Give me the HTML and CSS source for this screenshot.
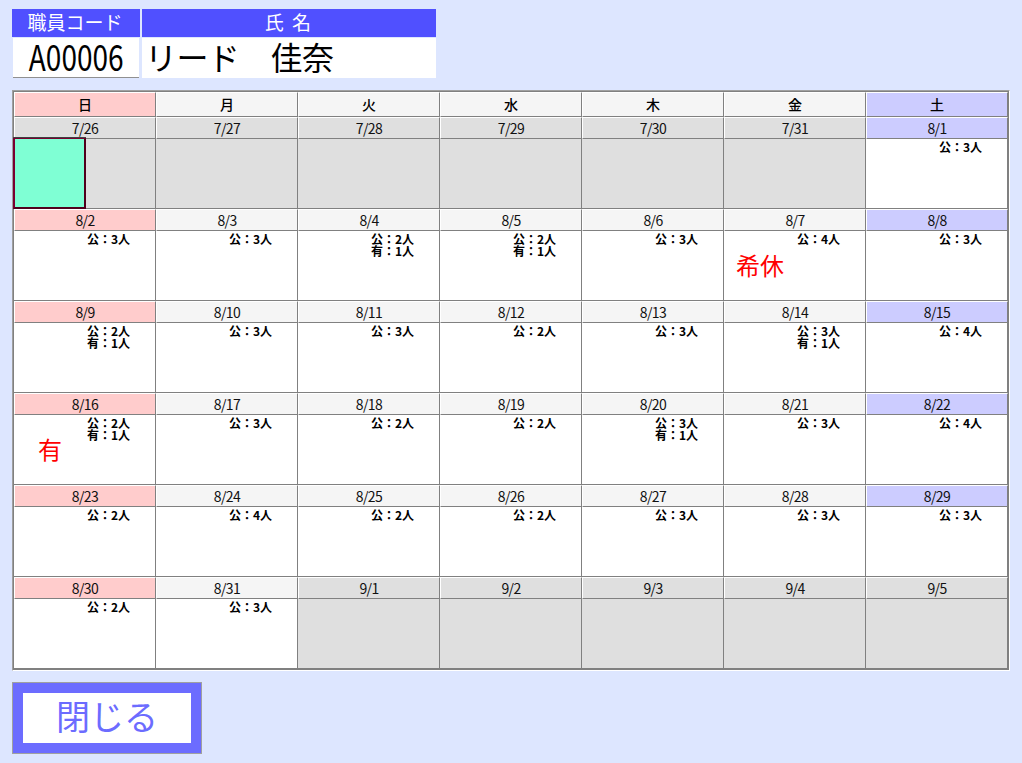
FILE: index.html
```html
<!DOCTYPE html>
<html lang="ja">
<head>
<meta charset="utf-8">
<title>勤務カレンダー</title>
<link rel="stylesheet" href="styles.css">
</head>
<body>
<div class="info">
  <div class="info-col code-col">
    <div class="info-head">職員コード</div>
    <div class="info-val code-val"><span class="code-txt">A00006</span></div>
  </div>
  <div class="info-col name-col">
    <div class="info-head name-head">氏 名</div>
    <div class="info-val name-val">リード　佳奈</div>
  </div>
</div>
<div class="cal">
  <div class="grid">
    <div class="c wd sun">日</div><div class="c wd">月</div><div class="c wd">火</div><div class="c wd">水</div><div class="c wd">木</div><div class="c wd">金</div><div class="c wd sat">土</div>

    <div class="c dt off">7/26</div><div class="c dt off">7/27</div><div class="c dt off">7/28</div><div class="c dt off">7/29</div><div class="c dt off">7/30</div><div class="c dt off">7/31</div><div class="c dt sat">8/1</div>
    <div class="c bd off"><div class="sel"></div></div><div class="c bd off"></div><div class="c bd off"></div><div class="c bd off"></div><div class="c bd off"></div><div class="c bd off"></div><div class="c bd"><div class="n">公：3人</div></div>

    <div class="c dt sun">8/2</div><div class="c dt">8/3</div><div class="c dt">8/4</div><div class="c dt">8/5</div><div class="c dt">8/6</div><div class="c dt">8/7</div><div class="c dt sat">8/8</div>
    <div class="c bd"><div class="n">公：3人</div></div><div class="c bd"><div class="n">公：3人</div></div><div class="c bd"><div class="n">公：2人<br>有：1人</div></div><div class="c bd"><div class="n">公：2人<br>有：1人</div></div><div class="c bd"><div class="n">公：3人</div></div><div class="c bd"><div class="m">希休</div><div class="n">公：4人</div></div><div class="c bd"><div class="n">公：3人</div></div>

    <div class="c dt sun">8/9</div><div class="c dt">8/10</div><div class="c dt">8/11</div><div class="c dt">8/12</div><div class="c dt">8/13</div><div class="c dt">8/14</div><div class="c dt sat">8/15</div>
    <div class="c bd"><div class="n">公：2人<br>有：1人</div></div><div class="c bd"><div class="n">公：3人</div></div><div class="c bd"><div class="n">公：3人</div></div><div class="c bd"><div class="n">公：2人</div></div><div class="c bd"><div class="n">公：3人</div></div><div class="c bd"><div class="n">公：3人<br>有：1人</div></div><div class="c bd"><div class="n">公：4人</div></div>

    <div class="c dt sun">8/16</div><div class="c dt">8/17</div><div class="c dt">8/18</div><div class="c dt">8/19</div><div class="c dt">8/20</div><div class="c dt">8/21</div><div class="c dt sat">8/22</div>
    <div class="c bd"><div class="m">有</div><div class="n">公：2人<br>有：1人</div></div><div class="c bd"><div class="n">公：3人</div></div><div class="c bd"><div class="n">公：2人</div></div><div class="c bd"><div class="n">公：2人</div></div><div class="c bd"><div class="n">公：3人<br>有：1人</div></div><div class="c bd"><div class="n">公：3人</div></div><div class="c bd"><div class="n">公：4人</div></div>

    <div class="c dt sun">8/23</div><div class="c dt">8/24</div><div class="c dt">8/25</div><div class="c dt">8/26</div><div class="c dt">8/27</div><div class="c dt">8/28</div><div class="c dt sat">8/29</div>
    <div class="c bd"><div class="n">公：2人</div></div><div class="c bd"><div class="n">公：4人</div></div><div class="c bd"><div class="n">公：2人</div></div><div class="c bd"><div class="n">公：2人</div></div><div class="c bd"><div class="n">公：3人</div></div><div class="c bd"><div class="n">公：3人</div></div><div class="c bd"><div class="n">公：3人</div></div>

    <div class="c dt sun">8/30</div><div class="c dt">8/31</div><div class="c dt off">9/1</div><div class="c dt off">9/2</div><div class="c dt off">9/3</div><div class="c dt off">9/4</div><div class="c dt off">9/5</div>
    <div class="c bd"><div class="n">公：2人</div></div><div class="c bd"><div class="n">公：3人</div></div><div class="c bd off"></div><div class="c bd off"></div><div class="c bd off"></div><div class="c bd off"></div><div class="c bd off"></div>
  </div>
</div>
<div class="btn-box"><button class="close" type="button">閉じる</button></div>
</body>
</html>
```
FILE: styles.css
```css
* { box-sizing: border-box; }
html, body { margin: 0; padding: 0; }
body {
  width: 1022px;
  height: 763px;
  overflow: hidden;
  background: #dde6ff;
  font-family: "Noto Sans CJK JP", "Noto Sans", sans-serif;
  color: #000;
  padding: 9px 0 0 12px;
}
.info { display: flex; gap: 2px; height: 69px; }
.info-col { display: flex; flex-direction: column; }
.code-col { width: 128px; }
.name-col { width: 294px; }
.info-head {
  height: 28px;
  padding-right: 2px;
  background: #5050ff;
  color: #fff;
  font-size: 19px;
  line-height: 26px;
  text-align: center;
}
.name-head { word-spacing: 4px; }
.info-val {
  margin-top: 1px;
  height: 40px;
  background: #fff;
  font-size: 32px;
  line-height: 36px;
  white-space: nowrap;
}
.code-val {
  margin-left: 1px;
  margin-right: 1px;
  display: flex;
  justify-content: center;
  border-bottom: 1px solid #909090;
}
.code-txt {
  display: block;
  flex: none;
  font-size: 35px;
  line-height: 36px;
  transform: scaleX(0.8);
}
.name-val { padding-left: 3px; letter-spacing: -0.6px; }

.cal {
  margin-top: 12px;
  width: 998px;
  border: 1px solid;
  border-color: #a0a0a0 #fff #fff #a0a0a0;
}
.grid {
  display: grid;
  grid-template-columns: repeat(7, 142px);
  grid-template-rows: 25px 22px 70px 22px 70px 22px 70px 22px 70px 22px 70px 22px 70px;
  border: 1px solid #808080;
}
.c {
  border-right: 1px solid #808080;
  border-bottom: 1px solid #808080;
}
.wd, .dt {
  background: #f5f5f5;
  border-top: 1px solid #fff;
  border-left: 1px solid #fff;
  text-align: center;
}
.wd { font-size: 14px; line-height: 23px; font-weight: 500; }
.dt { font-size: 14px; line-height: 21px; letter-spacing: -0.6px; color: #111; }
.sun { background: #ffcccc; }
.sat { background: #ccccff; }
.off { background: #dfdfdf; }
.bd {
  position: relative;
  display: grid;
  grid-template-columns: 73px 1fr;
  grid-template-rows: 1fr;
  background: #fff;
}
.bd.off { background: #dfdfdf; }
.m {
  grid-column: 1;
  grid-row: 1;
  align-self: center;
  margin-bottom: 2px;
  padding-right: 1px;
  text-align: center;
  color: #ff0000;
  font-size: 24px;
  line-height: 28px;
  white-space: nowrap;
}
.n {
  grid-column: 2;
  grid-row: 1;
  padding-top: 2px;
  font-size: 12px;
  line-height: 12px;
  font-weight: 700;
  white-space: nowrap;
}
.sel {
  position: absolute;
  left: -1px;
  top: -1px;
  width: 73px;
  height: 71px;
  background: #7fffd4;
  border: 2px solid #7a0030;
  border-top-width: 1px;
  border-right-color: #50001c;
  border-bottom-color: #50001c;
  box-shadow: 0 -1px 0 #404040;
}
.btn-box { margin-top: 11px; }
.close {
  display: block;
  width: 190px;
  height: 72px;
  margin: 0;
  padding: 0 0 5px;
  background: #fff;
  border: 1px solid #a0a0a0;
  outline: 10px solid #6c6cff;
  outline-offset: -11px;
  color: #6c6cff;
  font-family: "Noto Sans CJK JP", "Noto Sans", sans-serif;
  font-size: 34px;
  line-height: 40px;
}
```
